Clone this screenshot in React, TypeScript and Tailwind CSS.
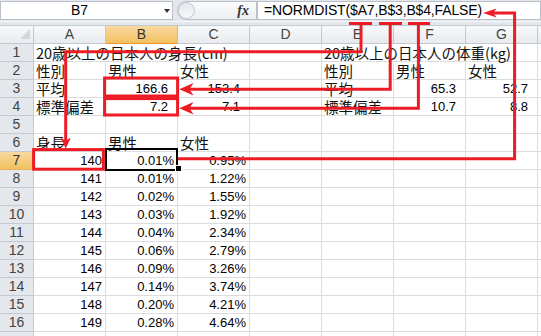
import React from "react";

type Cell = { t: string; k: "j" | "r9" | "r3"; span?: number } | null;

const j = (t: string): Cell => ({ t, k: "j" });
const n9 = (t: string): Cell => ({ t, k: "r9" });
const n3 = (t: string): Cell => ({ t, k: "r3" });

const data: [string, string, string][] = [
  ["140", "0.01%", "0.95%"],
  ["141", "0.01%", "1.22%"],
  ["142", "0.02%", "1.55%"],
  ["143", "0.03%", "1.92%"],
  ["144", "0.04%", "2.34%"],
  ["145", "0.06%", "2.79%"],
  ["146", "0.09%", "3.26%"],
  ["147", "0.14%", "3.74%"],
  ["148", "0.20%", "4.21%"],
  ["149", "0.28%", "4.64%"],
];

const rows: Cell[][] = [
  [{ t: "20歳以上の日本人の身長(cm)", k: "j", span: 3 }, null, { t: "20歳以上の日本人の体重(kg)", k: "j", span: 3 }],
  [j("性別"), j("男性"), j("女性"), null, j("性別"), j("男性"), j("女性")],
  [j("平均"), n9("166.6"), n9("153.4"), null, j("平均"), n9("65.3"), n9("52.7")],
  [j("標準偏差"), n9("7.2"), n9("7.1"), null, j("標準偏差"), n9("10.7"), n9("8.8")],
  [null, null, null, null, null, null, null],
  [j("身長"), j("男性"), j("女性"), null, null, null, null],
  ...data.map((d) => [n3(d[0]), n3(d[1]), n3(d[2]), null, null, null, null]),
  [null, null, null, null, null, null, null],
];

const cols = ["A", "B", "C", "D", "E", "F", "G"];

function DataCell({ c }: { c: Cell }) {
  if (!c) {
    return <div className="h-[18px] border-r border-b border-[#dadcdd]" />;
  }
  const span = c.span === 3 ? "col-span-3" : "";
  if (c.k === "j") {
    return (
      <div
        className={`${span} h-[18px] border-r border-b border-[#dadcdd] flex items-end pl-[2px] whitespace-nowrap overflow-visible font-['Noto_Sans_CJK_JP',sans-serif] text-[14.5px] leading-[16px] text-[#111]`}
      >
        {c.t}
      </div>
    );
  }
  const pr = c.k === "r9" ? "pr-[9px]" : "pr-[3px]";
  return (
    <div
      className={`h-[18px] border-r border-b border-[#dadcdd] flex items-end justify-end ${pr} whitespace-nowrap font-['Liberation_Sans',sans-serif] text-[13px] leading-[16px] text-black`}
    >
      {c.t}
    </div>
  );
}

function FormulaBar() {
  return (
    <div className="h-[26px] bg-[#e3e7ec] border-b border-[#c4cad2] flex flex-col">
      <div className="flex items-start pt-[1px] h-[21px]">
        <div className="relative w-[173px] h-[19px] bg-white border border-[#b9c0c9] flex items-center justify-center pr-[14px] font-['Liberation_Sans',sans-serif] text-[14px] text-black">
          B7
          <span className="absolute right-[2px] top-[7px] w-0 h-0 border-l-[3.5px] border-r-[3.5px] border-t-[4px] border-l-transparent border-r-transparent border-t-[#333]" />
        </div>
        <div className="ml-[4px] w-[80px] h-[19px] rounded-l-full border border-[#b9c0c9] bg-linear-to-b from-[#fbfbfc] to-[#eceef1] flex items-center">
          <div className="w-[17px] h-[17px] rounded-full border border-[#c2c7ce] bg-linear-to-b from-[#e4e7eb] to-[#f7f8f9]" />
          <span className="ml-auto mr-[7px] font-['Liberation_Serif',serif] italic font-bold text-[14px] leading-[14px] text-[#333]">
            fx
          </span>
        </div>
        <div className="flex-1 h-[19px] bg-white border border-[#b9c0c9] pl-[6px] flex items-center font-['Liberation_Sans',sans-serif] text-[14px] tracking-[-0.15px] text-black whitespace-nowrap">
          =NORMDIST($A7,B$3,B$4,FALSE)
        </div>
      </div>
      <div className="h-[1px] bg-[#f6f7f9]" />
    </div>
  );
}

function Sheet() {
  return (
    <div className="grid grid-cols-[34px_repeat(7,72px)_1fr]">
      <div className="relative h-[18px] border-r border-b border-[#c5c9cf] bg-linear-to-b from-[#f8f9fa] to-[#e8ebee]">
        <div className="absolute right-[3px] bottom-[4px] w-[10px] h-[10px] bg-[#d3d7dc] [clip-path:polygon(100%_0,100%_100%,0_100%)]" />
      </div>
      {cols.map((c) => (
        <div
          key={c}
          className={
            c === "B"
              ? "h-[18px] border-r border-b border-r-[#e8b35b] border-b-[#f29436] bg-linear-to-b from-[#f9d99f] to-[#f1c15f] flex items-center justify-center font-['Liberation_Sans',sans-serif] text-[14px] text-[#333]"
              : "h-[18px] border-r border-b border-[#c5c9cf] bg-linear-to-b from-[#f8f9fa] to-[#e8ebee] flex items-center justify-center font-['Liberation_Sans',sans-serif] text-[14px] text-[#444]"
          }
        >
          {c}
        </div>
      ))}
      <div className="h-[18px] border-b border-[#c5c9cf] bg-linear-to-b from-[#f8f9fa] to-[#e8ebee]" />
      {rows.map((r, i) => (
        <React.Fragment key={i}>
          <div
            className={
              i === 6
                ? "h-[18px] border-r border-b border-r-[#f29436] border-b-[#e8b35b] bg-linear-to-b from-[#f9d99f] to-[#f1c15f] flex items-center justify-center font-['Liberation_Sans',sans-serif] text-[14px] text-[#333]"
                : "h-[18px] border-r border-b border-[#c5c9cf] bg-[#e4e7eb] flex items-center justify-center font-['Liberation_Sans',sans-serif] text-[14px] text-[#444]"
            }
          >
            {i < 16 ? i + 1 : ""}
          </div>
          {r.map((c, k) => (
            <DataCell key={k} c={c} />
          ))}
          <div className="h-[18px] border-b border-[#dadcdd]" />
        </React.Fragment>
      ))}
    </div>
  );
}

function Overlay() {
  const red = "#ed1c24";
  return (
    <svg className="absolute left-0 top-0 pointer-events-none" width="541" height="336" viewBox="0 0 541 336">
      <g fill="none" stroke={red} strokeWidth="3">
        <line x1="349" y1="23.5" x2="372" y2="23.5" />
        <line x1="379" y1="23.5" x2="402" y2="23.5" />
        <line x1="408" y1="23.5" x2="430" y2="23.5" />
        <polyline points="361,23.5 361,51.8 65.7,51.8 65.7,141" />
        <polyline points="390.2,23.5 390.2,89.2 188,89.2" />
        <polyline points="418.4,23.5 418.4,108.3 188,108.3" />
        <polyline points="493,13 514.6,13 514.6,158.7 178,158.7" />
        <rect x="33.6" y="149.6" width="69.8" height="19.6" />
        <rect x="104.6" y="78" width="73" height="18" />
        <rect x="104.6" y="98.6" width="73" height="16.4" />
      </g>
      <g fill={red}>
        <polygon points="65.7,148.6 60.5,137.8 65.7,140.6 70.9,137.8" />
        <polygon points="179.3,89.2 193.5,82.9 189.5,89.2 193.5,95.5" />
        <polygon points="179.3,108.3 193.5,102 189.5,108.3 193.5,114.6" />
        <polygon points="483,13 496.6,8.4 493,13 496.6,17.6" />
      </g>
    </svg>
  );
}

export default function App() {
  return (
    <div className="relative w-[541px] h-[336px] overflow-hidden bg-white">
      <FormulaBar />
      <Sheet />
      <div className="absolute left-[105px] top-[148px] w-[73px] h-[23px] border-2 border-black" />
      <div className="absolute left-[175px] top-[165px] w-[7px] h-[7px] bg-black border border-white" />
      <Overlay />
    </div>
  );
}
